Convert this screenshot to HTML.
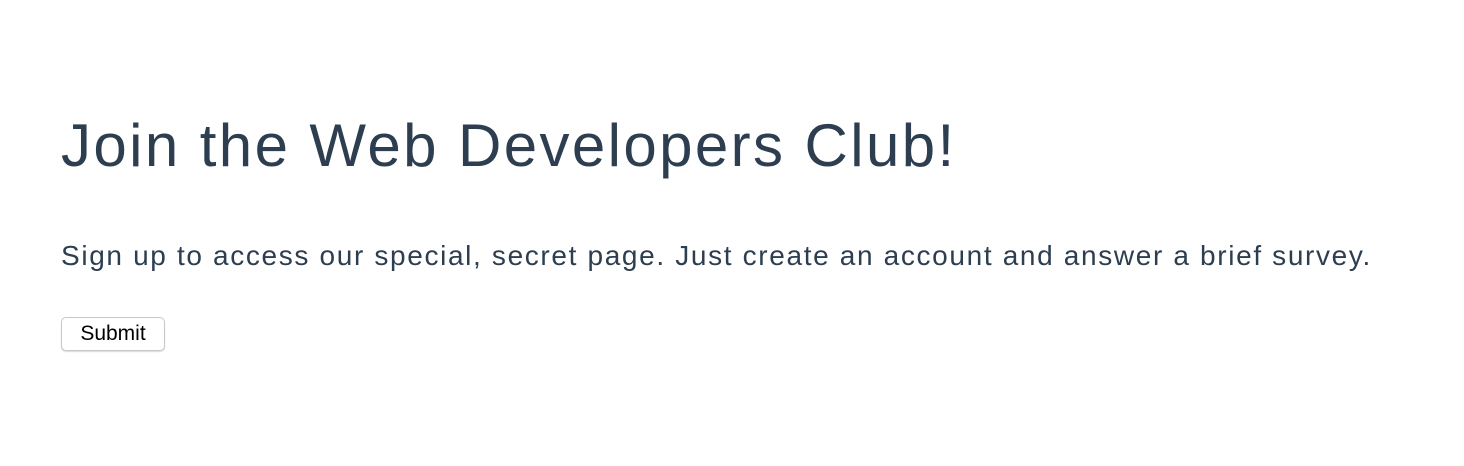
<!DOCTYPE html>
<html><head><style>
body{margin:0;width:1464px;height:466px;background:#fff;font-family:"Liberation Sans",sans-serif;color:#2c3e50}
h1{position:absolute;left:61px;top:110px;margin:0;font-weight:normal;font-size:60px;line-height:72px;white-space:nowrap;letter-spacing:2.4px}
p{position:absolute;left:61px;top:238px;margin:0;font-size:28px;line-height:36px;white-space:nowrap;letter-spacing:1.65px}
button{position:absolute;left:61px;top:317px;width:104px;height:34px;background:#fff;border:1px solid #c8c8c8;border-radius:5px;box-shadow:0 1px 1px rgba(0,0,0,.15);font-family:"Liberation Sans",sans-serif;font-size:21px;color:#000;padding:0}
</style></head><body>
<h1>Join the Web Developers Club!</h1>
<p>Sign up to access our special, secret page. Just create an account and answer a brief survey.</p>
<button>Submit</button>
</body></html>
